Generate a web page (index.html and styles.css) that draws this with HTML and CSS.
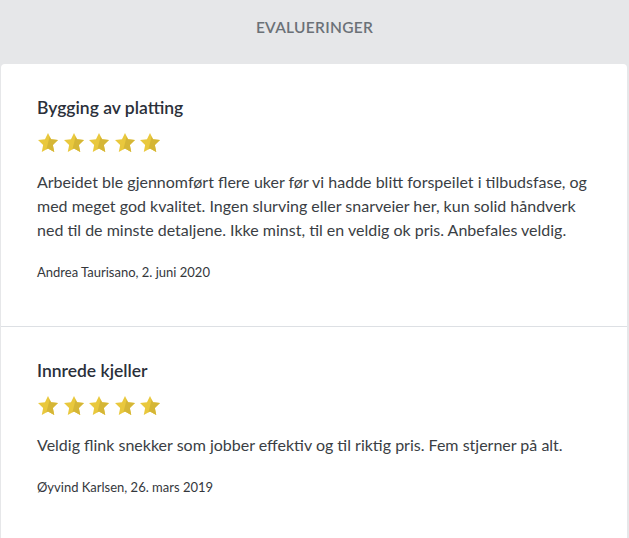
FILE: index.html
```html
<!DOCTYPE html>
<html lang="no">
<head>
<meta charset="utf-8">
<link rel="stylesheet" href="styles.css">
</head>
<body>
<svg width="0" height="0" class="defs">
  <defs>
    <symbol id="star" viewBox="0 0 24 24">
      <path fill="#e9c83d" d="M12 1l3.3 6.9 7.6.9-5.6 5.3 1.5 7.6L12 17.9l-6.8 3.8 1.5-7.6-5.6-5.3 7.6-.9z"/>
      <clipPath id="half"><polygon points="15,0 24,0 24,24 9,24"/></clipPath>
      <path clip-path="url(#half)" fill="#d5b636" d="M12 1l3.3 6.9 7.6.9-5.6 5.3 1.5 7.6L12 17.9l-6.8 3.8 1.5-7.6-5.6-5.3 7.6-.9z"/>
    </symbol>
  </defs>
</svg>
<header class="head">EVALUERINGER</header>
<main class="card">
  <section class="review">
    <h2 class="title">Bygging av platting</h2>
    <div class="stars">
      <svg class="star"><use href="#star"/></svg>
      <svg class="star"><use href="#star"/></svg>
      <svg class="star"><use href="#star"/></svg>
      <svg class="star"><use href="#star"/></svg>
      <svg class="star"><use href="#star"/></svg>
    </div>
    <p class="text">Arbeidet ble gjennomført flere uker før vi hadde blitt forspeilet i tilbudsfase, og med meget god kvalitet. Ingen slurving eller snarveier her, kun solid håndverk ned til de minste detaljene. Ikke minst, til en veldig ok pris. Anbefales veldig.</p>
    <p class="author">Andrea Taurisano, 2. juni 2020</p>
  </section>
  <section class="review">
    <h2 class="title">Innrede kjeller</h2>
    <div class="stars">
      <svg class="star"><use href="#star"/></svg>
      <svg class="star"><use href="#star"/></svg>
      <svg class="star"><use href="#star"/></svg>
      <svg class="star"><use href="#star"/></svg>
      <svg class="star"><use href="#star"/></svg>
    </div>
    <p class="text">Veldig flink snekker som jobber effektiv og til riktig pris. Fem stjerner på alt.</p>
    <p class="author">Øyvind Karlsen, 26. mars 2019</p>
  </section>
</main>
</body>
</html>
```
FILE: styles.css
```css
html, body {
  margin: 0;
  padding: 0;
  height: 100%;
}
body {
  background: #e6e7e9;
  font-family: "Lato", "Liberation Sans", sans-serif;
  color: #2f333a;
  overflow: hidden;
}
.defs {
  position: absolute;
  width: 0;
  height: 0;
}
.head {
  height: 64px;
  display: flex;
  align-items: center;
  justify-content: center;
  font-size: 15.5px;
  font-weight: 600;
  letter-spacing: 0.3px;
  color: #6b7177;
  padding-bottom: 11px;
  box-sizing: border-box;
}
.card {
  background: #fff;
  margin: 0 2px 0 1px;
  border-radius: 4px 4px 0 0;
  min-height: 480px;
}
.review {
  padding: 33px 36px 45px 36px;
  border-bottom: 1px solid #dde0e4;
}
.title {
  margin: 0;
  font-size: 17.5px;
  line-height: 22px;
  font-weight: 600;
  color: #2b303a;
}
.stars {
  display: flex;
  gap: 3.5px;
  margin-top: 13px;
  height: 22px;
}
.star {
  width: 22px;
  height: 22px;
}
.text {
  margin: 16px 0 0;
  font-size: 16px;
  line-height: 24px;
  color: #3a3e44;
}
.author {
  margin: 21px 0 0;
  font-size: 13px;
  line-height: 18px;
  color: #34373c;
}
```
